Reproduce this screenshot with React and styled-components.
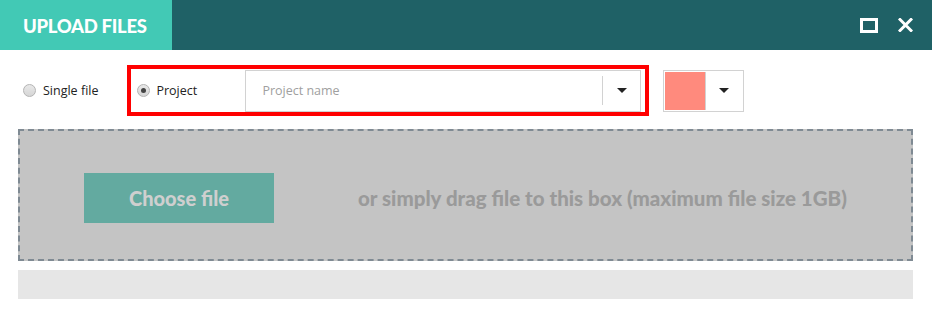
import React from "react";
import styled, { createGlobalStyle } from "styled-components";

const Global = createGlobalStyle`
  html, body { margin: 0; padding: 0; background: #fff; }
  body { font-family: "Open Sans", "Noto Sans", sans-serif; }
  * { box-sizing: border-box; }
`;

const Page = styled.div`
  width: 932px;
  height: 319px;
  background: #fff;
`;

const Header = styled.div`
  display: flex;
  align-items: stretch;
  height: 50px;
  background: #1f6166;
`;

const TitleTab = styled.div`
  width: 172px;
  background: #42c9b5;
  color: #fff;
  display: flex;
  align-items: center;
  padding-left: 23px;
  padding-top: 1px;
  font-family: "Lato", sans-serif;
  font-weight: 900;
  font-size: 18.5px;
  letter-spacing: -0.3px;
`;

const HeaderActions = styled.div`
  margin-left: auto;
  display: flex;
  align-items: center;
  gap: 20px;
  padding-right: 19px;
`;

const IconButton = styled.div`
  display: flex;
  align-items: center;
  justify-content: center;
  width: ${(p) => p.$w}px;
  height: 20px;
`;

const OptionsRow = styled.div`
  display: flex;
  align-items: center;
  padding: 15px 0 0 23px;
`;

const RadioLabel = styled.label`
  display: flex;
  align-items: center;
  flex-shrink: 0;
  gap: 7px;
  font-size: 12.5px;
  color: #222;
  font-family: "Open Sans", sans-serif;
`;

const RadioDot = styled.span`
  width: 13px;
  height: 13px;
  border-radius: 50%;
  border: 1px solid #b4b4b4;
  background: linear-gradient(#e8e8e8, #d6d6d6);
  display: flex;
  align-items: center;
  justify-content: center;
  &::after {
    content: "";
    width: 5px;
    height: 5px;
    border-radius: 50%;
    background: ${(p) => (p.$checked ? "#444" : "transparent")};
  }
`;

const Highlight = styled.div`
  margin-left: 29px;
  flex-shrink: 0;
  display: flex;
  align-items: center;
  width: 522px;
  height: 51px;
  border: 4px solid #ff0000;
  padding: 0 4px 0 6px;
`;

const ProjectLabel = styled(RadioLabel)`
  width: 108px;
  gap: 6px;
`;

const Select = styled.div`
  display: flex;
  flex-shrink: 0;
  align-items: center;
  width: 396px;
  height: 42px;
  border: 1px solid #d2d2d2;
  background: #fff;
`;

const SelectText = styled.div`
  flex: 1;
  padding-left: 16px;
  font-size: 12.5px;
  color: #a0a0a0;
`;

const Divider = styled.div`
  width: 1px;
  height: 29px;
  background: #d2d2d2;
`;

const Caret = styled.div`
  width: ${(p) => p.$w}px;
  display: flex;
  justify-content: center;
  align-items: center;
  &::after {
    content: "";
    border-left: 5px solid transparent;
    border-right: 5px solid transparent;
    border-top: 5px solid #222;
  }
`;

const ColorPicker = styled.div`
  margin-left: 14px;
  flex-shrink: 0;
  display: flex;
  align-items: stretch;
  width: 81px;
  height: 42px;
  border: 1px solid #d2d2d2;
  padding: 1px;
`;

const Swatch = styled.div`
  width: 41px;
  background: ${(p) => p.$color};
  border-right: 1px solid #d2d2d2;
`;

const DropZone = styled.div`
  margin: 13px 19px 0 18px;
  height: 132px;
  background: #c4c4c4;
  border: 2px dashed #7f8a93;
  display: flex;
  align-items: center;
  padding: 6px 0 0 64px;
  gap: 84px;
`;

const ChooseButton = styled.div`
  width: 190px;
  height: 50px;
  background: #63aaa0;
  color: #cfcfcf;
  display: flex;
  align-items: center;
  justify-content: center;
  font-family: "Lato", sans-serif;
  font-weight: 900;
  font-size: 20px;
`;

const DropHint = styled.div`
  color: #9a9a9a;
  font-family: "Lato", sans-serif;
  font-weight: 900;
  font-size: 20.5px;
`;

const Progress = styled.div`
  margin: 9px 19px 0 18px;
  height: 29px;
  background: #e6e6e6;
`;

export default function App() {
  return (
    <Page>
      <Global />
      <Header>
        <TitleTab>UPLOAD FILES</TitleTab>
        <HeaderActions>
          <IconButton $w={18}>
            <svg width="18" height="15" viewBox="0 0 18 15">
              <rect x="1.5" y="1.5" width="15" height="12" fill="none" stroke="#fff" strokeWidth="3" />
            </svg>
          </IconButton>
          <IconButton $w={15}>
            <svg width="15" height="14" viewBox="0 0 15 14">
              <path d="M2 1.5 L13 12.5 M13 1.5 L2 12.5" stroke="#fff" strokeWidth="3" strokeLinecap="square" />
            </svg>
          </IconButton>
        </HeaderActions>
      </Header>
      <OptionsRow>
        <RadioLabel>
          <RadioDot />
          Single file
        </RadioLabel>
        <Highlight>
          <ProjectLabel>
            <RadioDot $checked />
            Project
          </ProjectLabel>
          <Select>
            <SelectText>Project name</SelectText>
            <Divider />
            <Caret $w={37} />
          </Select>
        </Highlight>
        <ColorPicker>
          <Swatch $color="#ff8a7d" />
          <Caret $w={37} />
        </ColorPicker>
      </OptionsRow>
      <DropZone>
        <ChooseButton>Choose file</ChooseButton>
        <DropHint>or simply drag file to this box (maximum file size 1GB)</DropHint>
      </DropZone>
      <Progress />
    </Page>
  );
}
